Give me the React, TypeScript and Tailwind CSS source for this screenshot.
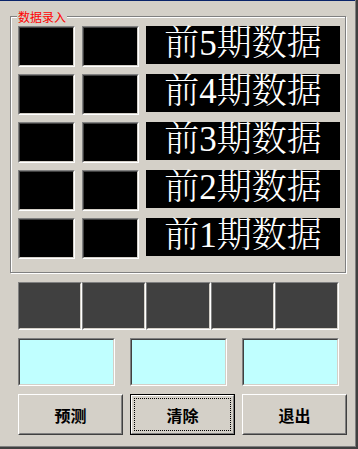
import React from "react";

const ROWS = ["前5期数据", "前4期数据", "前3期数据", "前2期数据", "前1期数据"];

// Win classic sunken edge (client edge)
function Sunken({ className, inner, children }: { className: string; inner: string; children?: React.ReactNode }) {
  return (
    <div className={"border border-t-[#808080] border-l-[#808080] border-r-white border-b-white " + className}>
      <div className={"h-full w-full border border-t-[#404040] border-l-[#404040] border-r-[#d4d0c8] border-b-[#d4d0c8] " + inner}>
        {children}
      </div>
    </div>
  );
}

function Button({ label, focused }: { label: string; focused?: boolean }) {
  if (focused) {
    return (
      <div className="w-[105px] h-[41px] border border-black">
        <div className="h-full w-full border border-t-white border-l-white border-r-[#808080] border-b-[#808080] p-[2px]">
          <div className="h-full w-full border border-dotted border-black flex items-center justify-center text-[16px] font-bold text-black leading-none">
            {label}
          </div>
        </div>
      </div>
    );
  }
  return (
    <div className="w-[105px] h-[41px] border border-t-white border-l-white border-r-[#404040] border-b-[#404040]">
      <div className="h-full w-full border border-t-[#d4d0c8] border-l-[#d4d0c8] border-r-[#808080] border-b-[#808080] flex items-center justify-center text-[16px] font-bold text-black leading-none">
        {label}
      </div>
    </div>
  );
}

export default function App() {
  return (
    <div className="w-[358px] h-[449px] bg-[#d4d0c8] border-r-2 border-b-2 border-[#404040] font-['Noto_Sans_CJK_SC',sans-serif]">
      <div className="h-full border-r border-b border-[#808080] flex flex-col">
        <div className="h-px bg-[#0a246a]" />

        {/* 数据录入 group */}
        <div className="relative ml-[10px] mt-[15px] w-[336px] h-[257px] border border-[#808080] shadow-[inset_1px_1px_0_#fff,1px_1px_0_#fff] pl-[7px] pt-[9px] flex flex-col gap-[7px]">
          <span className="absolute left-[6px] top-[-7px] px-px bg-[#d4d0c8] text-[12px] leading-[14px] text-[#ff0000]">数据录入</span>
          {ROWS.map((r) => (
            <div key={r} className="flex gap-[7px] h-[41px]">
              <Sunken className="w-[57px] h-[41px]" inner="bg-black" />
              <Sunken className="w-[57px] h-[41px]" inner="bg-black" />
              <div className="w-[194px] h-[38px] bg-black text-white flex items-center justify-center pb-[4px] text-[35px] leading-none font-light font-['Liberation_Serif','Noto_Serif_CJK_SC','Noto_Sans_CJK_SC',serif]">
                {r}
              </div>
            </div>
          ))}
        </div>

        {/* result cells */}
        <div className="ml-[18px] mt-[9px] w-[321px] h-[48px] grid grid-cols-5">
          {[0, 1, 2, 3, 4].map((i) => (
            <Sunken key={i} className="h-[48px]" inner="bg-[#404040]" />
          ))}
        </div>

        <div className="ml-[18px] mt-[8px] flex gap-[15px]">
          {[0, 1, 2].map((i) => (
            <Sunken key={i} className="w-[97px] h-[48px]" inner="bg-[#c0ffff]" />
          ))}
        </div>

        <div className="ml-[18px] mt-[8px] flex gap-[7px]">
          <Button label="预测" />
          <Button label="清除" focused />
          <Button label="退出" />
        </div>
      </div>
    </div>
  );
}
